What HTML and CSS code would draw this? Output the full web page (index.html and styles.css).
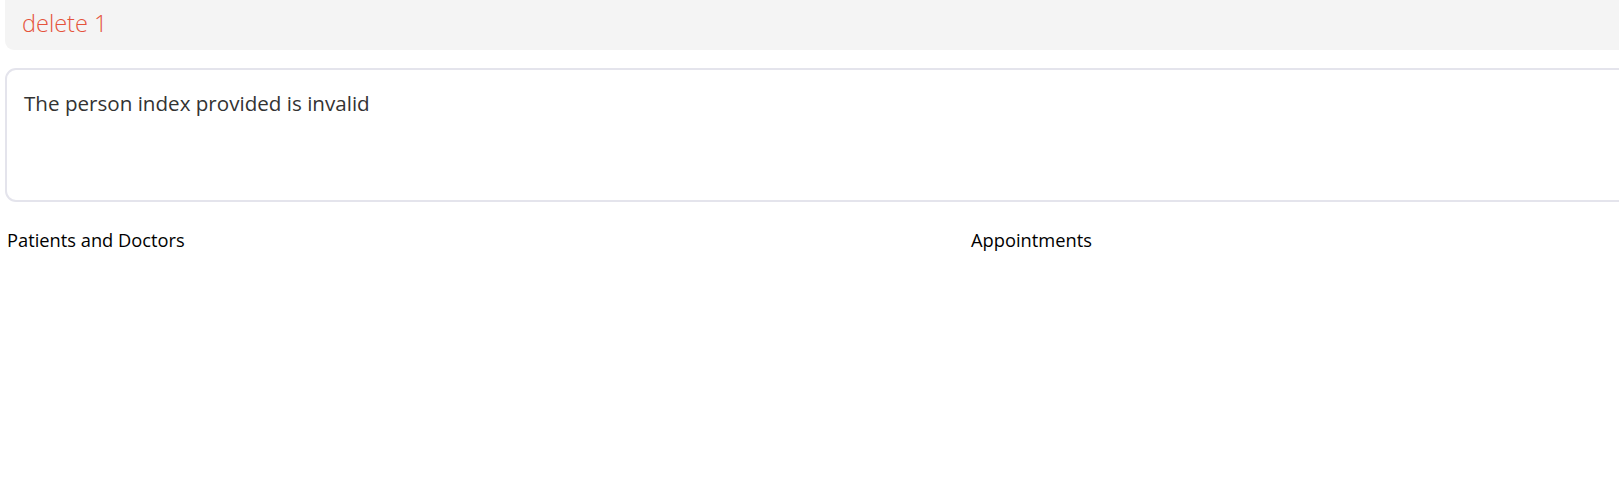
FILE: index.html
```html
<!DOCTYPE html>
<html>
<head>
<meta charset="utf-8">
<link rel="stylesheet" href="styles.css">
</head>
<body>
<div class="app">
  <div class="command-box"><span class="command-text">delete 1</span></div>
  <div class="result-box"><p class="result-text">The person index provided is invalid</p></div>
  <div class="panes">
    <div class="pane pane-left"><div class="pane-title">Patients and Doctors</div></div>
    <div class="pane pane-right"><div class="pane-title">Appointments</div></div>
  </div>
</div>
</body>
</html>
```
FILE: styles.css
```css
html, body {
  margin: 0;
  padding: 0;
  background: #ffffff;
  overflow: hidden;
}
.app {
  width: 1619px;
  height: 483px;
  overflow: hidden;
  font-family: "Open Sans", "Noto Sans", sans-serif;
}
.command-box {
  margin-left: 5px;
  width: 1660px;
  height: 50px;
  background: #f4f4f4;
  border-radius: 0 0 9px 9px;
  display: flex;
  align-items: center;
  padding-left: 17px;
  box-sizing: border-box;
}
.command-text {
  color: #e5533b;
  font-weight: 300;
  font-size: 23.5px;
  position: relative;
  top: -2px;
}
.result-box {
  margin-top: 18px;
  margin-left: 5px;
  width: 1660px;
  height: 134px;
  border: 2px solid #e4e4ec;
  border-radius: 11px;
  box-sizing: border-box;
  padding: 19px 17px;
}
.result-text {
  margin: 0;
  color: #333333;
  font-size: 20.6px;
}
.panes {
  display: grid;
  grid-template-columns: 970px 1fr;
  margin-top: 25px;
}
.pane-title {
  font-size: 18.3px;
  color: #000000;
  padding-left: 7px;
}
.pane-right .pane-title {
  padding-left: 1px;
}
```
